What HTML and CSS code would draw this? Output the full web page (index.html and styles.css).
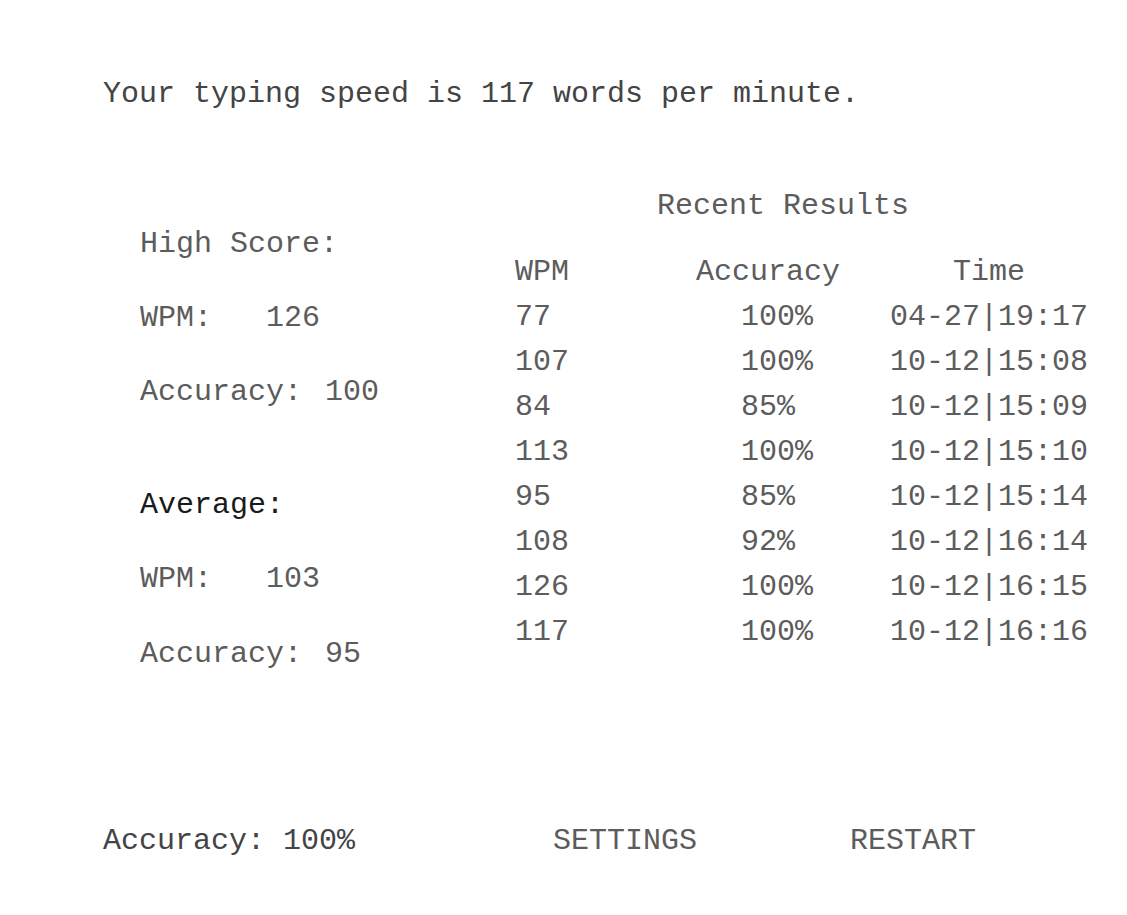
FILE: index.html
```html
<!DOCTYPE html>
<html>
<head>
<meta charset="utf-8">
<link rel="stylesheet" href="styles.css">
</head>
<body>
<div class="page">
  <div class="speed">Your typing speed is 117 words per minute.</div>
  <div class="main">
    <div class="stats">
      <div class="line high">High Score:</div>
      <div class="line wpm1">WPM:   126</div>
      <div class="line acc1">Accuracy: <span class="accval">100</span></div>
      <div class="line avg">Average:</div>
      <div class="line wpm2">WPM:   103</div>
      <div class="line acc2">Accuracy: <span class="accval">95</span></div>
    </div>
    <div class="results">
      <div class="title">Recent Results</div>
      <div class="table">
        <div class="h c1">WPM</div><div class="h c2">Accuracy</div><div class="h c3">Time</div>
        <div class="c1">77</div><div class="c2 v">100%</div><div class="c3">04-27|19:17</div>
        <div class="c1">107</div><div class="c2 v">100%</div><div class="c3">10-12|15:08</div>
        <div class="c1">84</div><div class="c2 v">85%</div><div class="c3">10-12|15:09</div>
        <div class="c1">113</div><div class="c2 v">100%</div><div class="c3">10-12|15:10</div>
        <div class="c1">95</div><div class="c2 v">85%</div><div class="c3">10-12|15:14</div>
        <div class="c1">108</div><div class="c2 v">92%</div><div class="c3">10-12|16:14</div>
        <div class="c1">126</div><div class="c2 v">100%</div><div class="c3">10-12|16:15</div>
        <div class="c1">117</div><div class="c2 v">100%</div><div class="c3">10-12|16:16</div>
      </div>
    </div>
  </div>
  <div class="footer">
    <div class="facc">Accuracy: 100%</div>
    <div class="btn settings">SETTINGS</div>
    <div class="btn restart">RESTART</div>
  </div>
</div>
</body>
</html>
```
FILE: styles.css
```css
html, body {
  margin: 0;
  padding: 0;
  background: #ffffff;
}
body {
  font-family: "Liberation Mono", "Courier New", monospace;
  font-size: 30px;
  color: #5c5c5c;
  width: 1127px;
  height: 915px;
  overflow: hidden;
}
.page {
  padding: 77px 0 0 103px;
}
.speed {
  line-height: 34px;
  color: #444444;
  white-space: pre;
}
.main {
  display: flex;
  margin-top: 78px;
}
.stats {
  flex: 0 0 375px;
  padding-left: 37px;
  padding-top: 38px;
  box-sizing: border-box;
  width: 412px;
  flex-basis: 412px;
}
.line {
  line-height: 34px;
  white-space: pre;
}
.wpm1, .acc1, .wpm2, .acc2 {
  margin-top: 40px;
}
.acc2 {
  margin-top: 41px;
}
.avg {
  margin-top: 79px;
  color: #1a1a1a;
}
.accval {
  margin-left: 5px;
}
.results {
  display: flex;
  flex-direction: column;
  flex: 0 0 auto;
  white-space: nowrap;
}
.title {
  line-height: 34px;
  padding-left: 142px;
}
.table {
  display: grid;
  grid-template-columns: 181px 194px 202px;
  grid-auto-rows: 45px;
  align-items: center;
  margin-top: 26px;
}
.c2.v {
  padding-left: 45px;
}
.c3 {
  white-space: nowrap;
}
.h.c3 {
  text-align: center;
  padding-right: 4px;
}
.footer {
  display: flex;
  margin-top: 153px;
  line-height: 34px;
  white-space: pre;
}
.facc {
  color: #444444;
}
.settings {
  margin-left: 198px;
}
.restart {
  margin-left: 153px;
}
```
